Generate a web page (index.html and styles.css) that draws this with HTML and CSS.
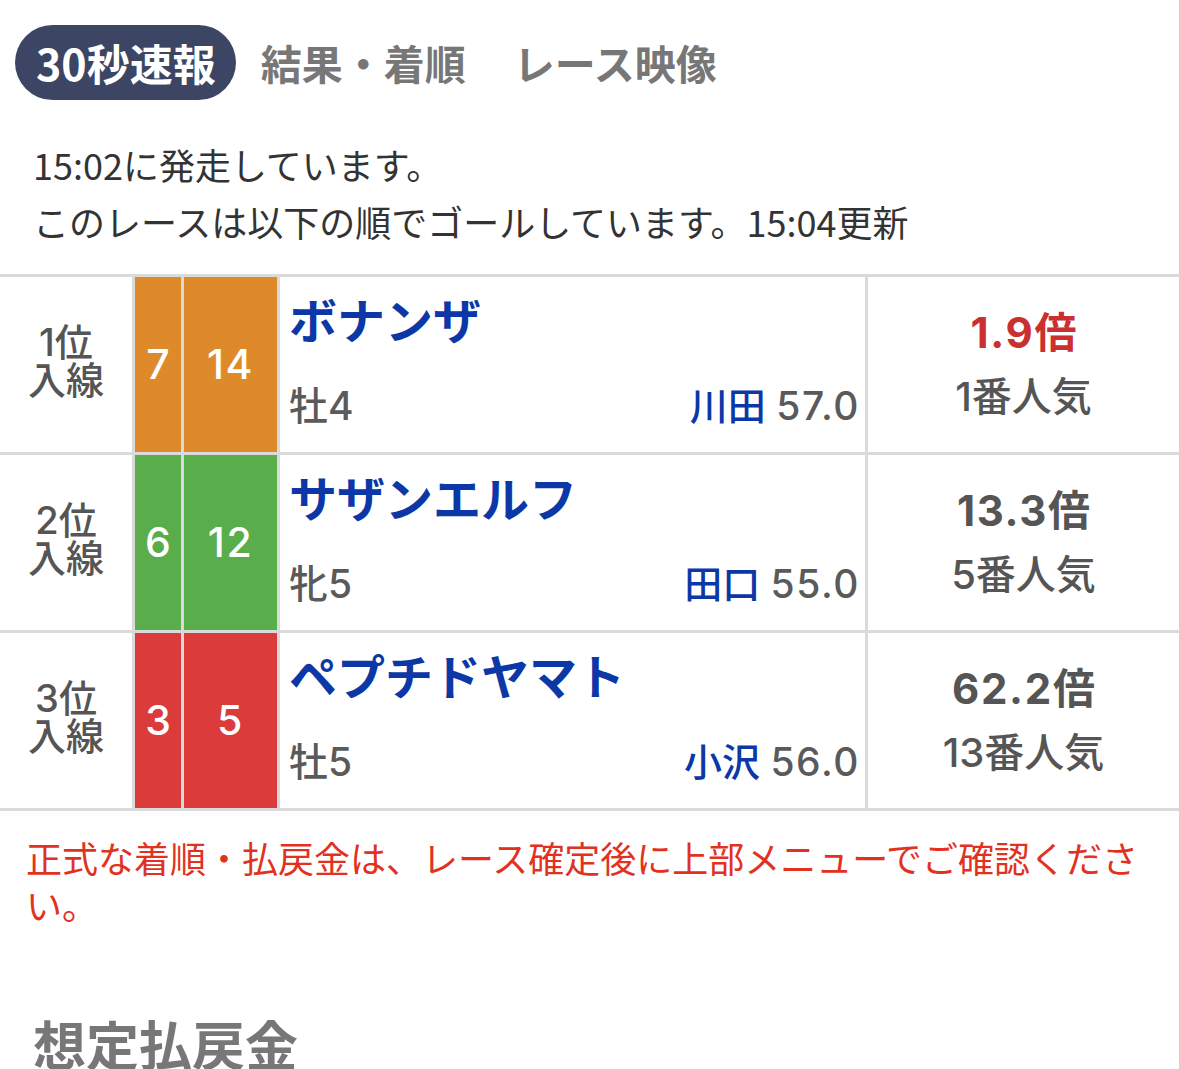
FILE: index.html
```html
<!DOCTYPE html>
<html lang="ja">
<head>
<meta charset="utf-8">
<title>30秒速報</title>
<link rel="stylesheet" href="styles.css">
</head>
<body>
<nav class="tabs">
  <span class="tab tab-active">30秒速報</span>
  <span class="tab tab-result">結果・着順</span>
  <span class="tab tab-video">レース映像</span>
</nav>

<div class="intro">
  <p>15:02に発走しています。</p>
  <p>このレースは以下の順でゴールしています。15:04更新</p>
</div>

<div class="results">
  <div class="row">
    <div class="rank">1位<br>入線</div>
    <div class="waku waku-7">7</div>
    <div class="umaban waku-7">14</div>
    <div class="horse">
      <div class="name">ボナンザ</div>
      <div class="sub">
        <span class="sex">牡4</span>
        <span class="jockey"><span class="jname">川田</span> <span class="num">57.0</span></span>
      </div>
    </div>
    <div class="odds">
      <div class="odds-val odds-top"><span class="num">1.9</span>倍</div>
      <div class="pop">1番人気</div>
    </div>
  </div>
  <div class="row">
    <div class="rank">2位<br>入線</div>
    <div class="waku waku-6">6</div>
    <div class="umaban waku-6">12</div>
    <div class="horse">
      <div class="name">サザンエルフ</div>
      <div class="sub">
        <span class="sex">牝5</span>
        <span class="jockey"><span class="jname">田口</span> <span class="num">55.0</span></span>
      </div>
    </div>
    <div class="odds">
      <div class="odds-val"><span class="num">13.3</span>倍</div>
      <div class="pop">5番人気</div>
    </div>
  </div>
  <div class="row">
    <div class="rank">3位<br>入線</div>
    <div class="waku waku-3">3</div>
    <div class="umaban waku-3">5</div>
    <div class="horse">
      <div class="name">ペプチドヤマト</div>
      <div class="sub">
        <span class="sex">牡5</span>
        <span class="jockey"><span class="jname">小沢</span> <span class="num">56.0</span></span>
      </div>
    </div>
    <div class="odds">
      <div class="odds-val"><span class="num">62.2</span>倍</div>
      <div class="pop">13番人気</div>
    </div>
  </div>
</div>

<p class="note">正式な着順・払戻金は、レース確定後に上部メニューでご確認ください。</p>

<h2 class="section-title">想定払戻金</h2>
</body>
</html>
```

FILE: styles.css
```css
* { box-sizing: border-box; }

body {
  margin: 0;
  background: #fff;
  font-family: "Noto Sans CJK JP", "Noto Sans", sans-serif;
  color: #333;
  width: 1179px;
  overflow: hidden;
}

.tabs {
  display: flex;
  align-items: center;
  padding: 25px 0 0 15px;
  height: 100px;
}

.tab {
  font-size: 41px;
  font-weight: 700;
  color: #777;
  line-height: 75px;
  white-space: nowrap;
}

.tab-active {
  background: #3c4563;
  color: #fff;
  height: 75px;
  border-radius: 38px;
  padding: 0 20px 0 21px;
  font-size: 43px;
}

.tab-result { margin-left: 25px; }
.tab-video { margin-left: 48px; }

.intro {
  padding: 0 0 0 33px;
  margin-top: 36px;
  font-size: 36px;
  line-height: 57px;
  color: #333;
}

.intro p { margin: 0; }

.results {
  margin-top: 24px;
  border-top: 3px solid #dadada;
  border-bottom: 3px solid #dadada;
  background: #dadada;
  display: grid;
  row-gap: 3px;
  font-family: Inter, "Noto Sans CJK JP", sans-serif;
}

.row {
  display: grid;
  grid-template-columns: 132px 46px 93px 585px 311px;
  column-gap: 3px;
  height: 175px;
}

.row > div { background: #fff; }

.num { letter-spacing: 0.04em; }

.rank {
  display: flex;
  align-items: center;
  justify-content: center;
  text-align: center;
  font-size: 38px;
  line-height: 38px;
  font-weight: 500;
  color: #555;
  padding-bottom: 7px;
}

.waku, .umaban {
  display: flex;
  align-items: center;
  justify-content: center;
  color: #fff;
  font-size: 41px;
  font-weight: 500;
  padding-bottom: 2px;
}

.umaban { letter-spacing: 0.04em; }

.row > .waku-7 { background: #df8a2a; }
.row > .waku-6 { background: #5aad4b; }
.row > .waku-3 { background: #dc3b3b; }

.horse {
  display: flex;
  flex-direction: column;
  justify-content: space-between;
  padding: 12px 5px 18px 9px;
}

.name {
  font-size: 48px;
  font-weight: 700;
  color: #0b38a6;
  line-height: 66px;
  white-space: nowrap;
}

.sub {
  display: flex;
  justify-content: space-between;
  align-items: baseline;
  font-size: 39px;
  line-height: 56px;
  color: #5a5a5a;
  font-weight: 500;
}

.jname { color: #0b38a6; font-size: 38px; }

.odds {
  display: flex;
  flex-direction: column;
  align-items: center;
  justify-content: center;
  color: #555;
}

.odds-val {
  font-size: 42px;
  font-weight: 700;
  line-height: 64px;
}

.odds-top { color: #c9302f; }

.pop {
  font-size: 40px;
  line-height: 64px;
  font-weight: 500;
}

.note {
  margin: 23px 0 0;
  padding: 0 26px 0 26px;
  font-size: 36px;
  line-height: 47px;
  color: #e2321f;
}

.section-title {
  margin: 84px 0 0;
  padding-left: 33px;
  font-size: 53px;
  line-height: 62px;
  font-weight: 700;
  color: #777;
}
```
